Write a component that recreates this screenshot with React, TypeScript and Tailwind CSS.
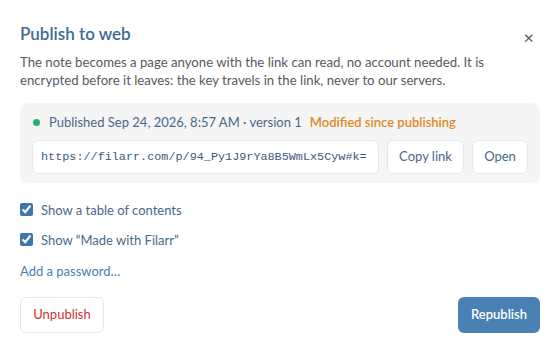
import { useState } from 'react'

const font = { fontFamily: '"Segoe UI", Lato, "Open Sans", sans-serif' }

export default function App() {
  const [toc, setToc] = useState(true)
  const [madeWith, setMadeWith] = useState(true)

  return (
    <div className="w-[560px] h-[349px] bg-white px-5 pt-[22px] text-[#2f4f6f]" style={font}>
      {/* Header */}
      <div className="flex items-start justify-between">
        <h2 className="text-[17px] font-semibold text-[#3b6b96] leading-6">Publish to web</h2>
        <button type="button" className="mt-[6px] mr-[6px] text-[#555] text-[18px] leading-none">
          ×
        </button>
      </div>
      <p className="mt-[7px] text-[13.2px] leading-[18px] text-[#555b61]">
        The note becomes a page anyone with the link can read, no account needed. It is
        <br />
        encrypted before it leaves: the key travels in the link, never to our servers.
      </p>

      {/* Status panel */}
      <div className="mt-[14px] bg-[#f5f5f6] rounded-lg px-3 pt-[10px] pb-[9px]">
        <div className="flex items-center text-[13px] leading-[18px]">
          <span className="w-[7px] h-[7px] rounded-full bg-[#1fb573] ml-[1px] mr-[9px]" />
          <span className="text-[#4a6888]">Published Sep 24, 2026, 8:57 AM · version 1</span>
          <span className="ml-[8px] font-semibold text-[#de8a1f]">Modified since publishing</span>
        </div>
        <div className="mt-[9px] flex gap-2">
          <input
            readOnly
            value="https://filarr.com/p/94_Py1J9rYa8B5WmLx5Cyw#k="
            className="flex-1 min-w-0 h-[34px] px-[8px] bg-white border border-[#e6e8eb] rounded-md text-[11.8px] text-[#3d5a78] outline-none"
            style={{ fontFamily: '"Liberation Mono", monospace' }}
          />
          <button type="button" className="w-[77px] h-[34px] whitespace-nowrap bg-white border border-[#e6e8eb] rounded-md text-[13px] text-[#4a6888]">
            Copy link
          </button>
          <button type="button" className="w-[56px] h-[34px] whitespace-nowrap bg-white border border-[#e6e8eb] rounded-md text-[13px] text-[#4a6888]">
            Open
          </button>
        </div>
      </div>

      {/* Options */}
      <div className="mt-[18px] flex flex-col text-[13px] text-[#4a6888]">
        <label className="flex items-center gap-2 h-[20px]">
          <input type="checkbox" checked={toc} onChange={(e) => setToc(e.target.checked)} className="w-[13px] h-[13px] accent-[#3f77aa] -mt-[4px]" />
          Show a table of contents
        </label>
        <label className="mt-[10px] flex items-center gap-2 h-[20px]">
          <input type="checkbox" checked={madeWith} onChange={(e) => setMadeWith(e.target.checked)} className="w-[13px] h-[13px] accent-[#3f77aa] -mt-[4px]" />
          Show “Made with Filarr”
        </label>
        <button type="button" className="mt-[11px] h-[20px] self-start text-[13px] text-[#4a7eb0]">
          Add a password…
        </button>
      </div>

      {/* Footer */}
      <div className="mt-[15px] flex justify-between">
        <button type="button" className="h-[36px] w-[84px] bg-white border border-[#e6e8eb] rounded-md text-[13px] text-[#cc3333]">
          Unpublish
        </button>
        <button type="button" className="h-[36px] w-[82px] bg-[#4a80b4] rounded-md text-[13px] font-semibold text-white">
          Republish
        </button>
      </div>
    </div>
  )
}
